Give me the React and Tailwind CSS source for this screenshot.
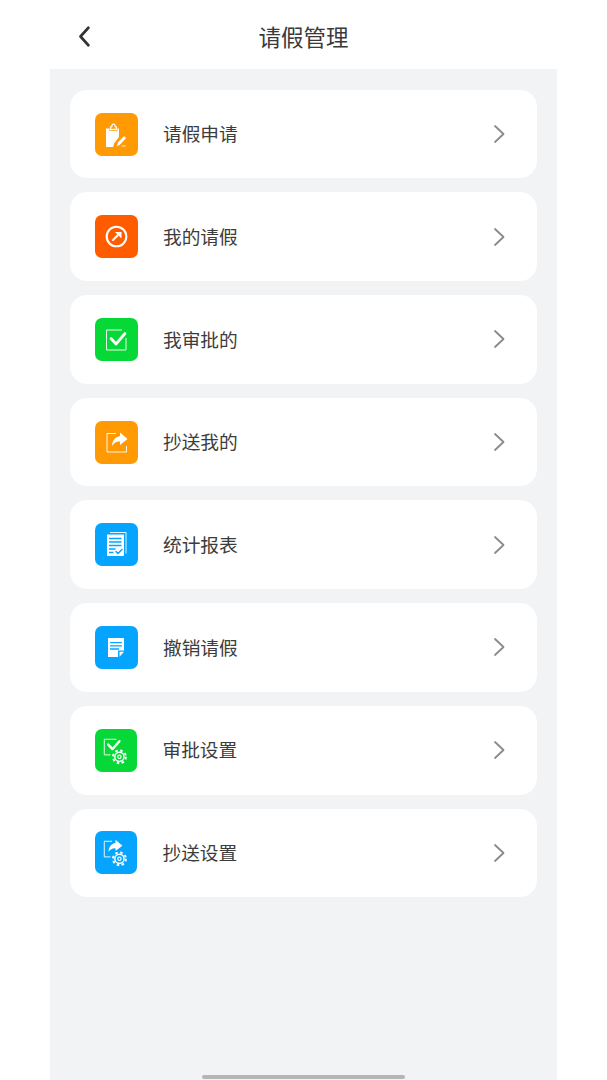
import React from 'react';

const orange = 'bg-[#ff9a05]';
const red = 'bg-[#ff5c00]';
const green = 'bg-[#06d838]';
const blue = 'bg-[#05a5ff]';

function Svg({ children }) {
  return (
    <svg viewBox="0 0 43 43" className="w-full h-full" fill="none" stroke="#fff" strokeWidth="1.2" strokeLinecap="round" strokeLinejoin="round">
      {children}
    </svg>
  );
}

const Gear = ({ cx, cy, bg }) => (
  <g>
    <circle cx={cx} cy={cy} r="9" fill={bg} stroke="none" />
    <circle cx={cx} cy={cy} r="6.600" stroke="#fff" strokeWidth="2" strokeDasharray="2.600 2.580" fill="none" strokeLinecap="butt" />
    <circle cx={cx} cy={cy} r="4.700" stroke="#fff" strokeWidth="1.500" fill="none" />
    <circle cx={cx} cy={cy} r="1.700" stroke="#fff" strokeWidth="1.200" fill="none" />
  </g>
);

const ClipboardIcon = () => (
  <Svg>
    <path d="M11 15.500h3.500v2.200h8v-2.200H24v8.500l-5 6.500-.8 3.500H11z" fill="#fff" stroke="none" />
    <path d="M15.500 16.300v-2.500h1.300c0-1.800.7-2.800 1.700-2.800s1.700 1 1.700 2.800h1.300v2.500z" fill="none" stroke="#fff" strokeWidth="1.200" />
    <path d="M21.500 33.500l1-3.800 6.500-7 2.500 2.300-6.500 7z" fill="#fff" stroke="#ff9a05" strokeWidth="0.700" />
    <path d="M27 33h3" strokeWidth="0.900" />
  </Svg>
);

const CompassIcon = () => (
  <Svg>
    <circle cx="21.500" cy="21.500" r="9.800" strokeWidth="2.100" />
    <path d="M18 25l6-6" strokeWidth="2.200" />
    <path d="M20 17h6.500v6.500z" fill="#fff" stroke="none" />
  </Svg>
);

const CheckIcon = () => (
  <Svg>
    <path d="M27 12H11.500v20h19.500V20" strokeWidth="0.900" strokeLinecap="butt" />
    <path d="M16 20.500l5 5.500 9-10.500" strokeWidth="2.700" />
  </Svg>
);

const ShareIcon = () => (
  <Svg>
    <path d="M21 12.500h-9v18.500h19.500v-6" strokeWidth="0.900" strokeLinecap="butt" />
    <path d="M25 11.500l7.500 6.500-7.500 6v-3.500c-3.500-.2-6 1.200-8 4.500.2-5.500 3.200-9.200 8-9.700z" fill="#fff" stroke="none" />
  </Svg>
);

const ReportIcon = () => (
  <Svg>
    <path d="M15 9.500h16v21" strokeWidth="0.900" strokeLinecap="butt" />
    <path d="M12 11.500h17v20c0 1-.5 1.500-1.500 1.500H12z" fill="#fff" stroke="none" />
    <path d="M14 15.500h12.500M14 19h12.500M14 22.500h12.500M14 26h6.500M14 29.500h4.500" stroke="#05a5ff" strokeWidth="1.300" strokeLinecap="butt" />
    <path d="M21 28.500l2 2 4-4" stroke="#05a5ff" strokeWidth="1.500" />
  </Svg>
);

const NoteIcon = () => (
  <Svg>
    <path d="M13 12h16v12.500h-6v6.500H13z" fill="#fff" stroke="none" />
    <path d="M15 16.700h12M15 19.900h12M15 23h9" stroke="#05a5ff" strokeWidth="1.300" strokeLinecap="butt" />
    <path d="M24.500 25.700h4.500l-4.500 5z" fill="#fff" stroke="none" />
  </Svg>
);

const CheckGearIcon = () => (
  <Svg>
    <path d="M22 10H9.500v16h6.500" strokeWidth="0.900" strokeLinecap="butt" />
    <path d="M13.500 15.500l4.500 4.500 7-8" strokeWidth="2.500" />
    <Gear cx={25} cy={28} bg="#06d838" />
  </Svg>
);

const ShareGearIcon = () => (
  <Svg>
    <path d="M17.500 10H9.500v16h6.500" strokeWidth="0.900" strokeLinecap="butt" />
    <path d="M21 8.500l7 6.200-7 5.300v-2.800c-3.200-.2-5.300 1-7.200 3.800.3-5.200 3-8.600 7.200-9.100z" fill="#fff" stroke="none" />
    <Gear cx={25} cy={28} bg="#05a5ff" />
  </Svg>
);

const items = [
  { label: '请假申请', color: orange, Icon: ClipboardIcon, size: 'w-[43px] h-[43px]' },
  { label: '我的请假', color: red, Icon: CompassIcon, size: 'w-[43px] h-[43px]' },
  { label: '我审批的', color: green, Icon: CheckIcon, size: 'w-[43px] h-[43px]' },
  { label: '抄送我的', color: orange, Icon: ShareIcon, size: 'w-[43px] h-[43px]' },
  { label: '统计报表', color: blue, Icon: ReportIcon, size: 'w-[43px] h-[43px]' },
  { label: '撤销请假', color: blue, Icon: NoteIcon, size: 'w-[43px] h-[43px]' },
  { label: '审批设置', color: green, Icon: CheckGearIcon, size: 'w-[42px] h-[43px]' },
  { label: '抄送设置', color: blue, Icon: ShareGearIcon, size: 'w-[42px] h-[43px]' },
];

export default function App() {
  return (
    <div className="relative w-[607px] h-[1080px] overflow-hidden bg-white font-['Noto_Sans_CJK_SC','Noto_Sans',sans-serif]">
      <header className="relative h-[69px] flex items-center justify-center">
        <svg viewBox="0 0 14 24" className="absolute left-[77px] top-[26px] w-[14px] h-[21px]" fill="none" stroke="#333" strokeWidth="3" strokeLinecap="round" strokeLinejoin="round">
          <path d="M12 2L3 12l9 10" />
        </svg>
        <h1 className="text-[22.500px] leading-none text-[#3a3a3a] mt-[3px] font-normal">请假管理</h1>
      </header>

      <main className="mx-[50px] h-[1011px] bg-[#f2f3f5] px-[20px] pt-[20.700px] flex flex-col gap-[14px]">
        {items.map(({ label, color, Icon, size }) => (
          <div key={label} className="h-[88.700px] shrink-0 bg-white rounded-[17px] flex items-center pl-[25px] pr-[32.500px]">
            <div className={`${size} ${color} rounded-[7px] shrink-0`}>
              <Icon />
            </div>
            <span className={`text-[18.700px] leading-none text-[#3c3c3c] mt-[-1px] ${size.startsWith('w-[42px]') ? 'ml-[25.500px]' : 'ml-[25px]'}`}>{label}</span>
            <svg viewBox="0 0 12 20" className="ml-auto w-[12px] h-[20px]" fill="none" stroke="#8a8a8a" strokeWidth="1.800" strokeLinecap="round" strokeLinejoin="round">
              <path d="M2 2l8.500 8L2 18" />
            </svg>
          </div>
        ))}
      </main>

      <div className="absolute left-[202px] top-[1075px] w-[203px] h-[4px] rounded-full bg-[#b5b5b5]" />
    </div>
  );
}
